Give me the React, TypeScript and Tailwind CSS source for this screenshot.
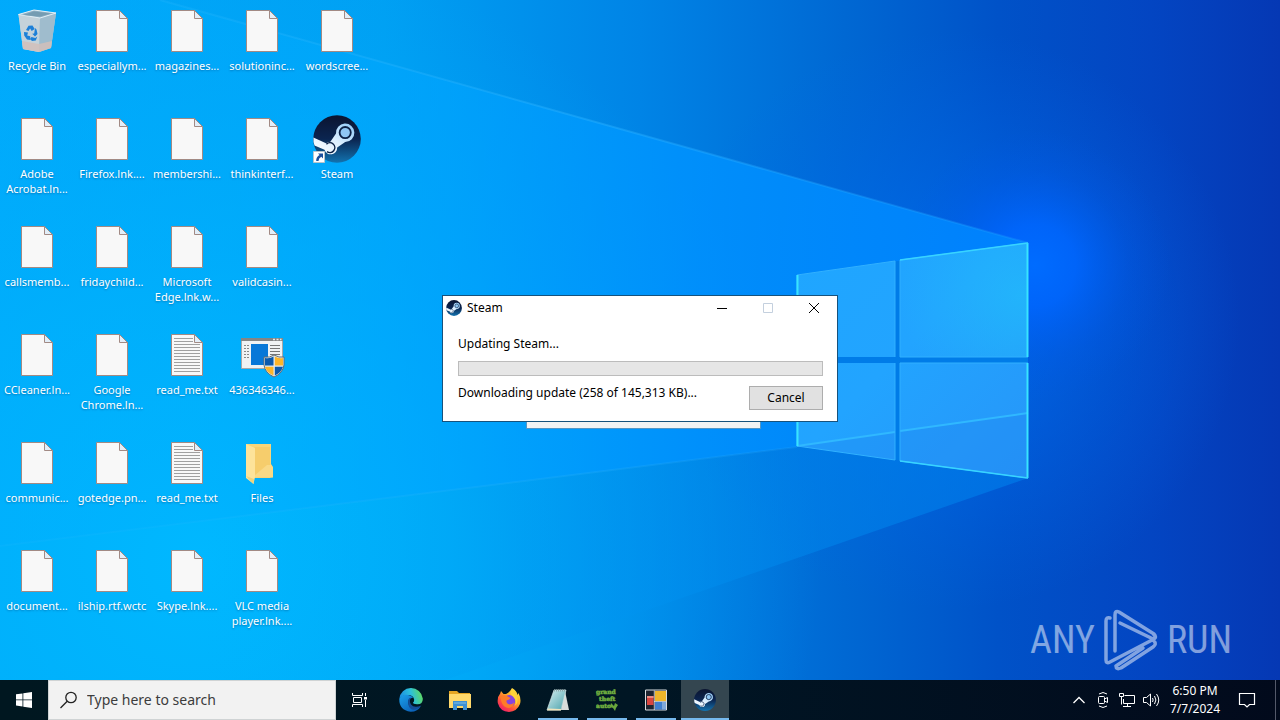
import type { ReactNode } from 'react';

type DesktopItem = {
  label: string;
  icon: 'file' | 'text' | 'bin' | 'folder' | 'app' | 'steam';
};

const desktopItems: DesktopItem[] = [
  { label: 'Recycle Bin', icon: 'bin' },
  { label: 'Adobe Acrobat.ln...', icon: 'file' },
  { label: 'callsmemb...', icon: 'file' },
  { label: 'CCleaner.ln...', icon: 'file' },
  { label: 'communic...', icon: 'file' },
  { label: 'document...', icon: 'file' },
  { label: 'especiallym...', icon: 'file' },
  { label: 'Firefox.lnk....', icon: 'file' },
  { label: 'fridaychild...', icon: 'file' },
  { label: 'Google Chrome.ln...', icon: 'file' },
  { label: 'gotedge.pn...', icon: 'file' },
  { label: 'ilship.rtf.wctc', icon: 'file' },
  { label: 'magazines...', icon: 'file' },
  { label: 'membershi...', icon: 'file' },
  { label: 'Microsoft Edge.lnk.w...', icon: 'file' },
  { label: 'read_me.txt', icon: 'text' },
  { label: 'read_me.txt', icon: 'text' },
  { label: 'Skype.lnk....', icon: 'file' },
  { label: 'solutioninc...', icon: 'file' },
  { label: 'thinkinterf...', icon: 'file' },
  { label: 'validcasin...', icon: 'file' },
  { label: '436346346...', icon: 'app' },
  { label: 'Files', icon: 'folder' },
  { label: 'VLC media player.lnk....', icon: 'file' },
  { label: 'wordscree...', icon: 'file' },
  { label: 'Steam', icon: 'steam' },
];

function Wallpaper() {
  return (
    <svg
      className="absolute inset-0 h-full w-full"
      viewBox="0 0 1280 720"
      preserveAspectRatio="xMidYMid slice"
      aria-hidden="true"
    >
      <defs>
        <linearGradient id="sky" gradientUnits="userSpaceOnUse" x1="0" y1="0" x2="1280" y2="0">
          <stop offset="0" stopColor="#00a8fa" />
          <stop offset="0.3" stopColor="#00a0f3" />
          <stop offset="0.5" stopColor="#0084e6" />
          <stop offset="0.66" stopColor="#0068d3" />
          <stop offset="0.78" stopColor="#0052c8" />
          <stop offset="0.9" stopColor="#0345c2" />
          <stop offset="1" stopColor="#0538b4" />
        </linearGradient>
        <radialGradient id="cyan" gradientUnits="userSpaceOnUse" cx="200" cy="560" r="620">
          <stop offset="0" stopColor="#00b8ff" />
          <stop offset="0.4" stopColor="#00b4fc" stopOpacity="0.7" />
          <stop offset="1" stopColor="#00a8f8" stopOpacity="0" />
        </radialGradient>
        <radialGradient id="glow" gradientUnits="userSpaceOnUse" cx="1035" cy="265" r="135">
          <stop offset="0" stopColor="#006cff" />
          <stop offset="0.3" stopColor="#0066ff" stopOpacity="0.85" />
          <stop offset="0.7" stopColor="#005cf0" stopOpacity="0.25" />
          <stop offset="1" stopColor="#0058e8" stopOpacity="0" />
        </radialGradient>
        <radialGradient id="haze" gradientUnits="userSpaceOnUse" cx="950" cy="320" r="290">
          <stop offset="0" stopColor="#0070f4" stopOpacity="0.8" />
          <stop offset="1" stopColor="#0064e8" stopOpacity="0" />
        </radialGradient>
        <linearGradient id="beam" gradientUnits="userSpaceOnUse" x1="200" y1="0" x2="1028" y2="0">
          <stop offset="0" stopColor="#00aeff" stopOpacity="0.3" />
          <stop offset="0.3" stopColor="#00a4ff" stopOpacity="0.65" />
          <stop offset="0.6" stopColor="#0092ff" stopOpacity="0.85" />
          <stop offset="1" stopColor="#0084ff" stopOpacity="0.9" />
        </linearGradient>
        <linearGradient id="floor" gradientUnits="userSpaceOnUse" x1="200" y1="0" x2="1028" y2="0">
          <stop offset="0" stopColor="#00b0fa" stopOpacity="0" />
          <stop offset="0.5" stopColor="#0094f0" stopOpacity="0.4" />
          <stop offset="1" stopColor="#007cea" stopOpacity="0.65" />
        </linearGradient>
        <linearGradient id="ray" gradientUnits="userSpaceOnUse" x1="160" y1="0" x2="1028" y2="0">
          <stop offset="0" stopColor="#40c0ff" stopOpacity="0.15" />
          <stop offset="0.5" stopColor="#30b4ff" stopOpacity="0.4" />
          <stop offset="1" stopColor="#20a0ff" stopOpacity="0.3" />
        </linearGradient>
        <linearGradient id="pane" gradientUnits="userSpaceOnUse" x1="797" y1="250" x2="1028" y2="478">
          <stop offset="0" stopColor="#1fa6ff" />
          <stop offset="0.45" stopColor="#22a4ff" />
          <stop offset="1" stopColor="#2795f8" />
        </linearGradient>
        <radialGradient id="shine" gradientUnits="userSpaceOnUse" cx="1020" cy="295" r="120">
          <stop offset="0" stopColor="#22bcfa" stopOpacity="0.7" />
          <stop offset="1" stopColor="#22bcfa" stopOpacity="0" />
        </radialGradient>
      </defs>
      <rect width="1280" height="720" fill="url(#sky)" />
      <rect width="1280" height="720" fill="url(#cyan)" />
      <rect x="640" y="20" width="640" height="620" fill="url(#haze)" />
      <rect x="800" y="60" width="480" height="460" fill="url(#glow)" />
      <path d="M160 0 1028 243V420L797 447 0 546V0Z" fill="url(#beam)" />
      <path d="M797 447 0 546V720H330L1028 478V430Z" fill="url(#floor)" />
      <path d="M797 275V446L1028 478V243Z" fill="#007ce8" />
      <path d="M160 0 1028 243" stroke="url(#ray)" strokeWidth="2" />
      <path d="M0 546 797 447" stroke="url(#ray)" strokeWidth="2" opacity="0.6" />
      <g fill="url(#pane)">
        <path d="M797 275 895 261V357H797Z" />
        <path d="M900 260 1028 243V357H900Z" />
        <path d="M797 363H895V460L797 446Z" />
        <path d="M900 363H1028V478L900 461Z" />
      </g>
      <path d="M900 260 1028 243V357H900Z" fill="url(#shine)" />
      <path d="M797 446 895 432V460ZM900 431 1028 413V478L900 461Z" fill="#2088f0" opacity="0.35" />
      <path d="M797 446 895 432M900 431 1028 413" stroke="#30b8ff" strokeWidth="2" fill="none" />
      <path
        d="M797 357V275L895 261M900 260 1028 243M797 363V446L895 460M900 461 1028 478M900 357H1028M900 363H1028M895 261V357M900 260V357M895 363V460M900 363V461"
        stroke="#30b0ff"
        fill="none"
      />
      <path d="M797.5 357V275M797.5 363V446M1027.5 243V357M1027.5 363V478" stroke="#38e4ff" strokeWidth="2" />
      <path d="M900 260 1028 243M900 461 1028 478" stroke="#38d4ff" strokeWidth="1.5" />
    </svg>
  );
}

function SteamArt({ className, id }: { className: string; id: string }) {
  return (
    <svg className={className} viewBox="0 0 48 48" aria-hidden="true">
      <defs>
        <linearGradient id={id} x1="0" y1="0" x2="0" y2="1">
          <stop offset="0" stopColor="#0b1430" />
          <stop offset="0.5" stopColor="#0b2550" />
          <stop offset="1" stopColor="#1273b0" />
        </linearGradient>
        <linearGradient id={`${id}-arm`} x1="0" y1="1" x2="1" y2="0">
          <stop offset="0" stopColor="#ffffff" />
          <stop offset="0.5" stopColor="#dcefff" />
          <stop offset="1" stopColor="#8cc8f8" />
        </linearGradient>
      </defs>
      <circle cx="24" cy="24" r="23.8" fill={`url(#${id})`} />
      <path
        d="M.4 22.500 13 28.2Q15 26.8 17.4 26.7L23 18.6A9.2 9.2 0 1 1 32.2 27L24.2 32.6A6.5 6.5 0 0 1 11.5 34.8L1.5 30.6Q.1 27 .4 22.500Z"
        fill={`url(#${id}-arm)`}
      />
      <circle cx="32.2" cy="17.6" r="5.6" fill="#8fc6f4" stroke="#0c2146" strokeWidth="1.8" />
      <path
        d="M13.4 29.2A4.9 4.9 0 1 1 14 36.6"
        fill="none"
        stroke="#0c2146"
        strokeWidth="1.5"
      />
    </svg>
  );
}

function DocumentIcon({ lined = false }: { lined?: boolean }) {
  return (
    <svg className="size-12" viewBox="0 0 48 48" aria-hidden="true">
      <path d="M8.500 3.500H31.500L39.500 11.500V44.500H8.500Z" fill="#f8f8f8" stroke="#a28a84" />
      <path d="M31.500 3.500V11.500H39.500Z" fill="#e2eef8" stroke="#a28a84" />
      {lined && (
        <path
          d="M11 7.500H30M11 10.500H30M11 13.500H37M11 16.500H37M11 19.500H37M11 22.500H37M11 25.500H37M11 28.500H37M11 31.500H37M11 34.500H37M11 37.500H37M11 40.500H37"
          stroke="#a0a0a0"
        />
      )}
    </svg>
  );
}

function BinIcon() {
  return (
    <svg className="size-12" viewBox="0 0 48 48" aria-hidden="true">
      <path d="M5.500 7.500 21 3 43 6 38 41 26 45 10 42Z" fill="#b4ccd9" />
      <path d="M5.500 7.500 27 11 26 45 10 42Z" fill="#c4d2da" />
      <path d="M27 11 43 6 38 41 26 45Z" fill="#9fbccd" />
      <path d="M9 34 26 37 39 34 38 41 26 45 10 42Z" fill="#d2bfba" opacity="0.85" />
      <path d="M5.500 7.500 21 3 43 6 27 11Z" fill="#8dafc3" stroke="#e2eff6" />
      <path d="m10 8 11-3.500 17 2-11 3Z" fill="#759cb2" />
      <g fill="#1c80d8">
        <path d="m13 23 2.500-4.300 4-.2 2.200 3.500-3 2-1.600-2.400-1.600 2.500Z" />
        <path d="m22 21 1.500 1.500 1 4.500-2.500 2.500-2.800-2.800 2-.3Z" />
        <path d="m11 25 4 .5-.8 3 3 .8.200 3.700-3.400-.5-2.800-4Z" />
        <path d="m18.500 30 3.800 1 2-1.500-1.500 4-3.800.5-2-2Z" />
      </g>
    </svg>
  );
}

function FolderIcon() {
  return (
    <svg className="size-12" viewBox="0 0 48 48" aria-hidden="true">
      <path d="M8 5H33V25L35 28V38L31 39H14Z" fill="#f9d57a" />
      <path d="M16 8H32V39H16Z" fill="#f6cd6c" />
      <path d="m16 37 13-11h4l2 3v9.500H16Z" fill="#f9d987" />
      <path d="M8 5 17 9V38L15.500 45 8 39Z" fill="#fde39a" />
      <path d="M8 37 15.500 45 16 40Z" fill="#efd27c" />
    </svg>
  );
}

function AppIcon() {
  return (
    <svg className="size-12" viewBox="0 0 48 48" aria-hidden="true">
      <path d="M3.500 8.500H44.500V37.500H3.500Z" fill="#f0f2f3" stroke="#a8a8a8" />
      <path d="M3 8.500H45" stroke="#858585" strokeWidth="3" />
      <path d="M35 8.500h2m1.500 0h2m1.500 0h1.500" stroke="#e8e8e8" strokeWidth="1.500" />
      <path d="M13 13H30V34H13Z" fill="#0878d8" />
      <path d="M6 14.500h5m-5 3h5m-5 3h5m-5 3h5m-5 3h5" stroke="#888" strokeDasharray="2 1" />
      <path d="M32 14.500h10m-10 3h10m-10 3h10m-10 3h10" stroke="#777" />
      <path d="M36 24Q41 27 46 26V34Q45 42 36 46 27 42 26 34V26Q32 27 36 24Z" fill="#e4ebef" stroke="#646d72" />
      <path d="M35.500 25.500V34.500H27V27Q32 28 35.500 25.500Z" fill="#0b5aad" />
      <path d="M36.800 25.500Q41 28 45 27V34.500H36.800Z" fill="#fcb52a" />
      <path d="M27 35.800H35.500V44.500Q28.500 41.500 27 35.800Z" fill="#fcb52a" />
      <path d="M36.800 35.800H45Q43.500 41.500 36.800 44.500Z" fill="#0b5aad" />
    </svg>
  );
}

function ItemIcon({ icon }: { icon: DesktopItem['icon'] }) {
  if (icon === 'bin') return <BinIcon />;
  if (icon === 'folder') return <FolderIcon />;
  if (icon === 'app') return <AppIcon />;
  if (icon === 'steam') {
    return (
      <span className="relative block size-12">
        <SteamArt className="size-12" id="steam-desktop" />
        <svg className="absolute bottom-0 left-0 size-3" viewBox="0 0 12 12" aria-hidden="true">
          <path d="M.5.5h11v11H.5Z" fill="#fff" stroke="#b8c4cc" />
          <path d="M5 2.500h5v5L8.300 5.800Q5.500 7 5.500 10H3.200Q3 6 6.600 4.100Z" fill="#1c4f9c" />
        </svg>
      </span>
    );
  }
  return <DocumentIcon lined={icon === 'text'} />;
}

function Watermark() {
  return (
    <div
      className="absolute right-12 bottom-2 flex items-center gap-2 font-['Roboto_Condensed','Liberation_Sans_Narrow','Roboto',sans-serif] text-[38px] leading-none text-white/50"
      aria-label="ANY RUN"
    >
      <span>ANY</span>
      <svg className="h-16 w-14" viewBox="0 0 56 64" fill="none" stroke="currentColor" strokeWidth="3.5" strokeLinejoin="round" strokeLinecap="round" aria-hidden="true">
        <path d="M7 10Q3 9 3 13V52Q3 56 7 54L51 31Q54 29 51 27M12 43V7Q12 2 16 4L51 26Q54 29 50 31L46 29 17 15M13 58Q13 62 18 60L50 39Q54 36 51 33M13 58 40 40" />
      </svg>
      <span>RUN</span>
    </div>
  );
}

function SteamDialog() {
  return (
    <section
      className="absolute top-[295px] left-[442px] flex w-[396px] flex-col border border-[#17527c] bg-white font-['Noto_Sans',sans-serif] text-[12px] leading-4 text-black"
      aria-label="Steam"
    >
      <header className="flex h-6 items-center pl-[3px]">
        <SteamArt className="size-4" id="steam-title" />
        <h1 className="ml-[5px] flex-1 text-[12px]">Steam</h1>
        <button type="button" aria-label="Minimize" className="grid h-6 w-[46px] place-items-center">
          <svg className="size-3" viewBox="0 0 12 12" aria-hidden="true">
            <path d="M1 6.500H11" stroke="#000" />
          </svg>
        </button>
        <button type="button" aria-label="Maximize" disabled className="grid h-6 w-[46px] place-items-center">
          <svg className="size-3" viewBox="0 0 12 12" aria-hidden="true">
            <path d="M1.500 1.500h9v9h-9Z" fill="none" stroke="#c4d0de" />
          </svg>
        </button>
        <button type="button" aria-label="Close" className="grid h-6 w-[46px] place-items-center">
          <svg className="size-3" viewBox="0 0 12 12" aria-hidden="true">
            <path d="m1 1 10 10M11 1 1 11" stroke="#000" />
          </svg>
        </button>
      </header>
      <div className="px-[14px] pt-4 pb-[11px] pl-[15px]">
        <p>Updating Steam...</p>
        <div
          role="progressbar"
          aria-label="Update progress"
          aria-valuenow={0}
          className="mt-[9px] h-[15px] border border-[#bcbcbc] bg-[#e6e6e6]"
        />
        <div className="mt-[9px] flex justify-between">
          <p>Downloading update (258 of 145,313 KB)...</p>
          <button type="button" className="mt-px h-6 w-[74px] border border-[#adadad] bg-[#e1e1e1]">
            Cancel
          </button>
        </div>
      </div>
    </section>
  );
}

function EdgeIcon() {
  return (
    <svg className="size-6" viewBox="0 0 24 24" aria-hidden="true">
      <defs>
        <linearGradient id="edge-top" x1="0" y1="0.500" x2="1" y2="0.300">
          <stop offset="0" stopColor="#1b8be0" />
          <stop offset="0.5" stopColor="#2cc0dc" />
          <stop offset="1" stopColor="#62dc58" />
        </linearGradient>
        <linearGradient id="edge-left" x1="0" y1="0" x2="0.800" y2="1">
          <stop offset="0" stopColor="#1ba0ea" />
          <stop offset="1" stopColor="#0a5cb4" />
        </linearGradient>
      </defs>
      <path d="M.3 11A11.800 11.800 0 0 1 23.800 10.500Q24 16 18.500 16.200 14 16.300 14 14.500 15.500 13.500 15 11 14 7 9 7 3 7 .3 11Z" fill="url(#edge-top)" />
      <path d="M.3 11Q3 6 9 7 13 7.500 14 10 9 9.500 9.300 14.500 9.800 21 16.500 20.500 19.500 20.300 22 18 18.500 24 11.500 23.800 0 22 .3 11Z" fill="url(#edge-left)" />
      <path d="M9.200 14Q8.500 10 12.500 9.500 9.500 12.500 12 16.500 15 20.500 22.300 17.500 18 22.500 13 21.500 9 19.500 9.200 14Z" fill="#154d98" />
    </svg>
  );
}

function ExplorerIcon() {
  return (
    <svg className="size-6" viewBox="0 0 24 24" aria-hidden="true">
      <path d="M1 3H9L11 5H22V10H1Z" fill="#e5a623" />
      <path d="M1 6H23V20H1Z" fill="#ffd96b" />
      <path d="M5 13H19V22H15V18H9V22H5Z" fill="#3d91d4" />
      <path d="M6 14H18V16H6Z" fill="#5fa8dc" />
    </svg>
  );
}

function FirefoxIcon() {
  return (
    <svg className="size-6" viewBox="0 0 24 24" aria-hidden="true">
      <defs>
        <linearGradient id="fox" x1="0.900" y1="0" x2="0.200" y2="1">
          <stop offset="0" stopColor="#fff04a" />
          <stop offset="0.4" stopColor="#ffad27" />
          <stop offset="0.7" stopColor="#ff543b" />
          <stop offset="1" stopColor="#ee1770" />
        </linearGradient>
      </defs>
      <path d="M15 0Q20 3 20.500 7L21.500 5Q24.500 11 23 16 20 23.500 12 24 3 23.500 .8 15 0 9 3.200 5.500L4 3 6.500 6 9 6Q13 4 15 0Z" fill="url(#fox)" />
      <circle cx="12.300" cy="13" r="6" fill="#8644e0" />
      <path d="M3 8.500Q7 6.500 10 8L13.500 10Q12.500 12 9.500 12.500 9 15.500 12.500 16.500 15.500 16.500 17 14.500 16.500 19 12 20 6 19.500 4.500 14Z" fill="#ff7c29" />
      <path d="M14.500 1.500Q12 5.500 16 8.500 20.500 13 17.500 18 21.500 15 20.500 10 19.500 6 14.500 1.500Z" fill="#ffd338" />
    </svg>
  );
}

function NotepadIcon() {
  return (
    <svg className="size-6" viewBox="0 0 24 24" aria-hidden="true">
      <defs>
        <linearGradient id="pad" x1="0" y1="0" x2="1" y2="1">
          <stop offset="0" stopColor="#d5eff0" />
          <stop offset="1" stopColor="#4ba2ac" />
        </linearGradient>
      </defs>
      <path d="M19 3 23 22 15 22Z" fill="#d8dcda" />
      <path d="M8 2H20L15 22H1Z" fill="url(#pad)" stroke="#d4e5e5" strokeWidth="0.700" />
      <path d="M2 20.500 15 21V22.500H1Z" fill="#f0e4bc" />
      <path d="M8 2.500H20" stroke="#8ea7aa" strokeDasharray="1 1" strokeWidth="2" />
    </svg>
  );
}

function GameIcon() {
  return (
    <svg className="size-6" viewBox="0 0 24 24" aria-hidden="true">
      <g fill="#84c24c" stroke="#6aa83c" strokeWidth="0.500" fontFamily="DejaVu Serif, serif" fontWeight="700" fontSize="6">
        <text x="1" y="6">grand</text>
        <text x="4" y="13">theft</text>
        <text x="1" y="20">auto</text>
      </g>
      <path d="m16 15 3 3 1-3 3 2-2 3-1 3-2-3-3-1Z" fill="#6aa83c" />
    </svg>
  );
}

function TilesIcon() {
  return (
    <svg className="size-6" viewBox="0 0 24 24" aria-hidden="true">
      <path d="M1.500 2H22.500V22H1.500Z" fill="#1e2430" stroke="#d8dcdf" />
      <path d="M3 8H9.500V17H3Z" fill="#d8453f" />
      <path d="M3 8H9.500V10H3Z" fill="#ee8a80" />
      <path d="M11 3H22V13H11Z" fill="#efb62a" />
      <path d="M11 14H22V21.500H11Z" fill="#3f7fd0" />
      <path d="M18 14H22V21.500H18Z" fill="#7fa8d8" />
      <path d="M10.300 2.500V22M10 13.500H22" stroke="#e4e7e9" strokeWidth="0.800" />
    </svg>
  );
}

type TaskButtonProps = {
  label: string;
  running?: boolean;
  active?: boolean;
  children: ReactNode;
};

function TaskButton({ label, running, active, children }: TaskButtonProps) {
  return (
    <button
      type="button"
      aria-label={label}
      className={`relative grid h-10 w-12 place-items-center ${active ? 'bg-[#344650]' : ''}`}
    >
      {children}
      {running && (
        <span className={`absolute bottom-0 h-0.5 bg-[#76b9ed] ${active ? 'inset-x-0' : 'inset-x-1'}`} />
      )}
    </button>
  );
}

function Tray() {
  return (
    <div className="ml-auto flex h-10 items-center text-white">
      <button type="button" aria-label="Show hidden icons" className="grid h-10 w-6 place-items-center">
        <svg className="size-4" viewBox="0 0 16 16" fill="none" stroke="currentColor" strokeWidth="1.300" aria-hidden="true">
          <path d="m2.500 11 5.500-5.500 5.500 5.500" />
        </svg>
      </button>
      <button type="button" aria-label="Meet Now" className="grid h-10 w-6 place-items-center">
        <svg className="size-4" viewBox="0 0 16 16" fill="none" stroke="currentColor" aria-hidden="true">
          <path d="M3.500 5.500q0-1 1-1h4q1 0 1 1v5q0 1-1 1h-4q-1 0-1-1ZM9.500 7l3-1.500v5l-3-1.500M4 2Q8-1 12 2M4 14Q8 17 12 14" />
        </svg>
      </button>
      <button type="button" aria-label="Network" className="grid h-10 w-6 place-items-center">
        <svg className="size-4" viewBox="0 0 16 16" fill="none" stroke="currentColor" aria-hidden="true">
          <path d="M5.500 3.500h10v8h-11V7M.500 1.500h4v3h-4ZM2.500 4.500v8M4 14.500h8M8.500 11.500v3" />
        </svg>
      </button>
      <button type="button" aria-label="Volume" className="grid h-10 w-6 place-items-center">
        <svg className="size-[18px]" viewBox="0 0 18 18" fill="none" stroke="currentColor" aria-hidden="true">
          <path d="M1.500 6.500h3l4-3.500v12l-4-3.500h-3ZM10.500 7Q11.800 9 10.500 11M12.500 5Q15.300 9 12.500 13M14.500 3Q19 9 14.500 15" />
        </svg>
      </button>
      <button type="button" className="flex h-10 w-16 flex-col items-center justify-center text-[12px] leading-[18px]">
        <span>6:50 PM</span>
        <span>7/7/2024</span>
      </button>
      <button type="button" aria-label="Notifications" className="grid h-10 w-10 place-items-center">
        <svg className="size-[18px]" viewBox="0 0 18 18" fill="none" stroke="currentColor" strokeWidth="1.200" aria-hidden="true">
          <path d="M1.500 2.500h15v11h-5L9 16l-2.500-2.500h-5Z" />
        </svg>
      </button>
      <button type="button" aria-label="Show desktop" className="ml-2 h-10 w-[5px] border-l border-[#54596a]" />
    </div>
  );
}

function Taskbar() {
  return (
    <footer className="relative flex h-10 items-center bg-linear-to-r from-[#001720] via-[#001624] to-[#020a1c]">
      <button type="button" aria-label="Start" className="grid h-10 w-12 place-items-center">
        <svg className="size-4" viewBox="0 0 16 16" fill="#fff" aria-hidden="true">
          <path d="M0 2.300 6.500 1.400V7.500H0ZM7.300 1.300 16 0V7.500H7.300ZM0 8.300H6.500V14.500L0 13.600ZM7.300 8.300H16V16L7.300 14.700Z" />
        </svg>
      </button>
      <label className="flex h-10 w-72 items-center gap-[9px] border border-[#cfd3d4] bg-[#f2f2f2] pl-[11px]">
        <svg className="size-[18px] shrink-0" viewBox="0 0 18 18" fill="none" stroke="#222" strokeWidth="1.300" aria-hidden="true">
          <circle cx="11" cy="6.500" r="5.200" />
          <path d="M7.200 10.300 .5 17" />
        </svg>
        <input
          type="text"
          aria-label="Search"
          placeholder="Type here to search"
          className="min-w-0 flex-1 bg-transparent text-[14px] leading-5 outline-none placeholder:text-[#3c3c3c]"
        />
      </label>
      <button type="button" aria-label="Task View" className="grid h-10 w-12 place-items-center">
        <svg className="size-4" viewBox="0 0 16 16" fill="none" stroke="#fff" aria-hidden="true">
          <path d="M.5 1v2.500h10V1M.5 15v-2.500h10V15M1.500 5.500h8v5h-8ZM13.500 1v3M13.500 8v7" />
          <path d="M12 5h3v2.500h-3Z" fill="#fff" stroke="none" />
        </svg>
      </button>
      <nav className="ml-[3px] flex gap-px" aria-label="Applications">
        <TaskButton label="Microsoft Edge">
          <EdgeIcon />
        </TaskButton>
        <TaskButton label="File Explorer">
          <ExplorerIcon />
        </TaskButton>
        <TaskButton label="Firefox">
          <FirefoxIcon />
        </TaskButton>
        <TaskButton label="Notepad" running>
          <NotepadIcon />
        </TaskButton>
        <TaskButton label="Game" running>
          <GameIcon />
        </TaskButton>
        <TaskButton label="Application" running>
          <TilesIcon />
        </TaskButton>
        <TaskButton label="Steam" running active>
          <SteamArt className="size-[22px]" id="steam-task" />
        </TaskButton>
      </nav>
      <Tray />
    </footer>
  );
}

export default function App() {
  return (
    <div className="relative flex min-h-screen flex-col overflow-hidden bg-[#0094f6] font-['Noto_Sans',sans-serif]">
      <Wallpaper />
      <main className="relative flex-1">
        <ul className="grid auto-cols-[75px] grid-flow-col grid-rows-[repeat(6,108px)] pt-[7px]">
          {desktopItems.map((item, index) => (
            <li key={index}>
              <button type="button" className="flex w-[74px] flex-col items-center">
                <ItemIcon icon={item.icon} />
                <span className="mt-[3px] text-[11px] leading-[15px] text-white [text-shadow:0_1px_2px_rgb(0_40_90/0.4)]">
                  {item.label}
                </span>
              </button>
            </li>
          ))}
        </ul>
        <div className="absolute top-[310px] left-[526px] h-[119px] w-[235px] border border-[#5496c4] bg-[#f3f3f3]" />
        <SteamDialog />
        <Watermark />
      </main>
      <Taskbar />
    </div>
  );
}
